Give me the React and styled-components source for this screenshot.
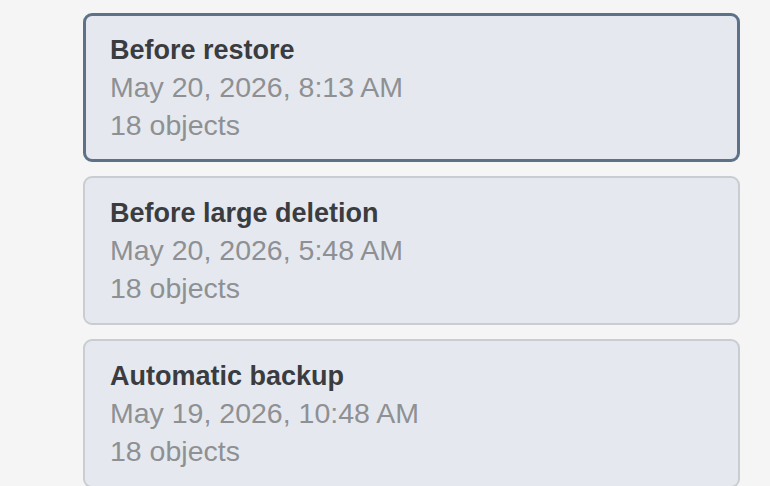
import React from "react";
import styled, { createGlobalStyle } from "styled-components";

const GlobalStyle = createGlobalStyle`
  html, body {
    margin: 0;
    padding: 0;
    background: #f5f5f5;
  }
  body {
    font-family: "Liberation Sans", Arial, sans-serif;
  }
`;

const Page = styled.div`
  box-sizing: border-box;
  width: 770px;
  height: 486px;
  overflow: hidden;
  padding: 13px 30px 0 83px;
  background: #f5f5f5;
`;

const List = styled.div`
  display: flex;
  flex-direction: column;
  gap: 14px;
`;

const Card = styled.div`
  box-sizing: border-box;
  height: 149px;
  padding: ${(p) => (p.$selected ? "16px 24px 15px" : "17px 25px 16px")};
  background: #e5e9ef;
  border: ${(p) => (p.$selected ? "3px solid #5f7189" : "2px solid #c9ccd1")};
  border-radius: 9px;
  cursor: pointer;
`;

const Title = styled.div`
  font-size: 27px;
  font-weight: 700;
  line-height: 36px;
  color: #3a3c3f;
`;

const Meta = styled.div`
  font-size: 28.5px;
  line-height: 38px;
  color: #8e9093;
`;

const backups = [
  { title: "Before restore", date: "May 20, 2026, 8:13 AM", count: 18, selected: true },
  { title: "Before large deletion", date: "May 20, 2026, 5:48 AM", count: 18 },
  { title: "Automatic backup", date: "May 19, 2026, 10:48 AM", count: 18 },
];

const App = () => {
  return (
    <>
      <GlobalStyle />
      <Page>
        <List>
          {backups.map((b) => (
            <Card key={b.title} $selected={b.selected}>
              <Title>{b.title}</Title>
              <Meta>{b.date}</Meta>
              <Meta>{b.count} objects</Meta>
            </Card>
          ))}
        </List>
      </Page>
    </>
  );
};

export default App;
